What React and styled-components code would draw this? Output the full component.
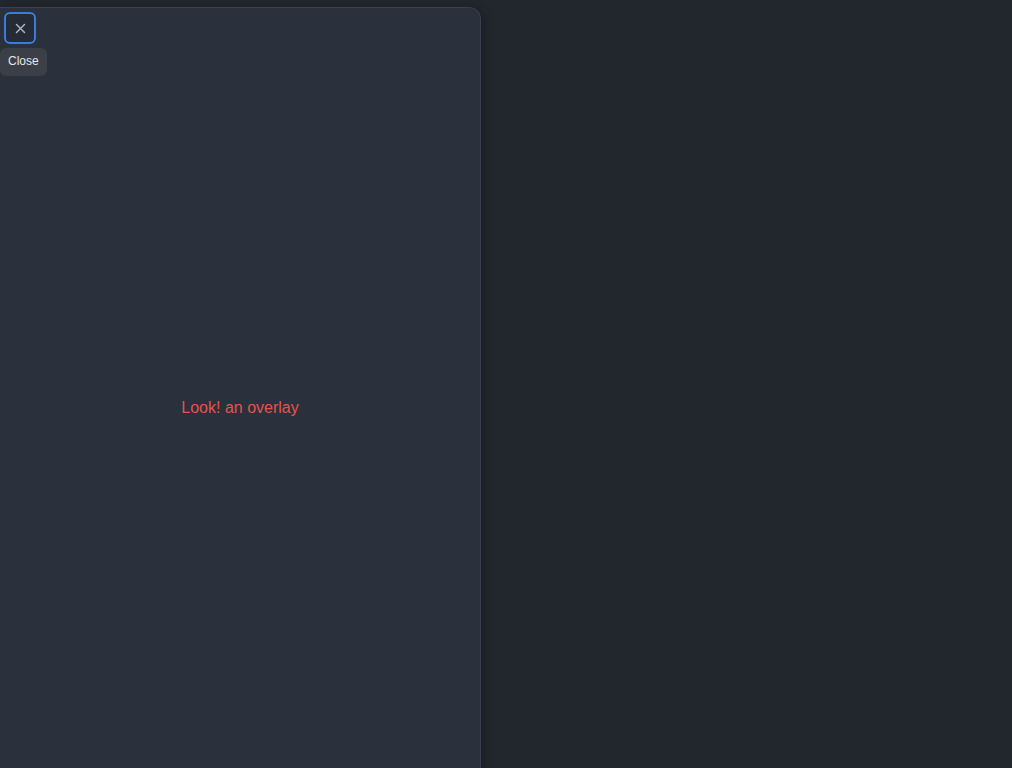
import React from 'react';
import styled, { createGlobalStyle } from 'styled-components';

const GlobalStyle = createGlobalStyle`
  html, body {
    margin: 0;
    padding: 0;
    background: #22272e;
    overflow: hidden;
    font-family: "Liberation Sans", Arial, sans-serif;
  }
`;

const Page = styled.div`
  display: flex;
  align-items: flex-start;
  width: 1012px;
  height: 768px;
  padding-top: 7px;
  box-sizing: border-box;
  overflow: hidden;
`;

const Drawer = styled.aside`
  position: relative;
  display: flex;
  align-items: center;
  justify-content: center;
  width: 481px;
  height: 802px;
  flex-shrink: 0;
  box-sizing: border-box;
  background: #2a303c;
  border: 1px solid #3a414e;
  border-left: none;
  border-radius: 0 12px 0 0;
  box-shadow: 3px 0 10px rgba(0, 0, 0, 0.22);
`;

const Message = styled.p`
  margin: 0;
  color: #e5534b;
  font-size: 16px;
`;

const CloseButton = styled.button`
  position: absolute;
  top: 4px;
  left: 4px;
  display: flex;
  align-items: center;
  justify-content: center;
  width: 32px;
  height: 32px;
  padding: 0;
  box-sizing: border-box;
  background: #262c37;
  border: 2px solid #3b7ddd;
  border-radius: 6px;
  color: #aeb4be;
  cursor: pointer;
`;

const Tooltip = styled.div`
  position: absolute;
  top: 40px;
  left: 0;
  padding: 7px 8px 8px;
  background: #3a3f48;
  border-radius: 6px;
  color: #e6e8eb;
  font-size: 12px;
  line-height: 13px;
`;

function CloseIcon() {
  return (
    <svg width="11" height="11" viewBox="0 0 11 11" fill="none">
      <path d="M1.5 1.5L9.5 9.5M9.5 1.5L1.5 9.5" stroke="currentColor" strokeWidth="1.5" strokeLinecap="round"/>
    </svg>
  );
}

export default function App() {
  return (
    <>
      <GlobalStyle/>
      <Page>
        <Drawer>
          <CloseButton aria-label="Close">
            <CloseIcon/>
          </CloseButton>
          <Tooltip>Close</Tooltip>
          <Message>Look! an overlay</Message>
        </Drawer>
      </Page>
    </>
  );
}
